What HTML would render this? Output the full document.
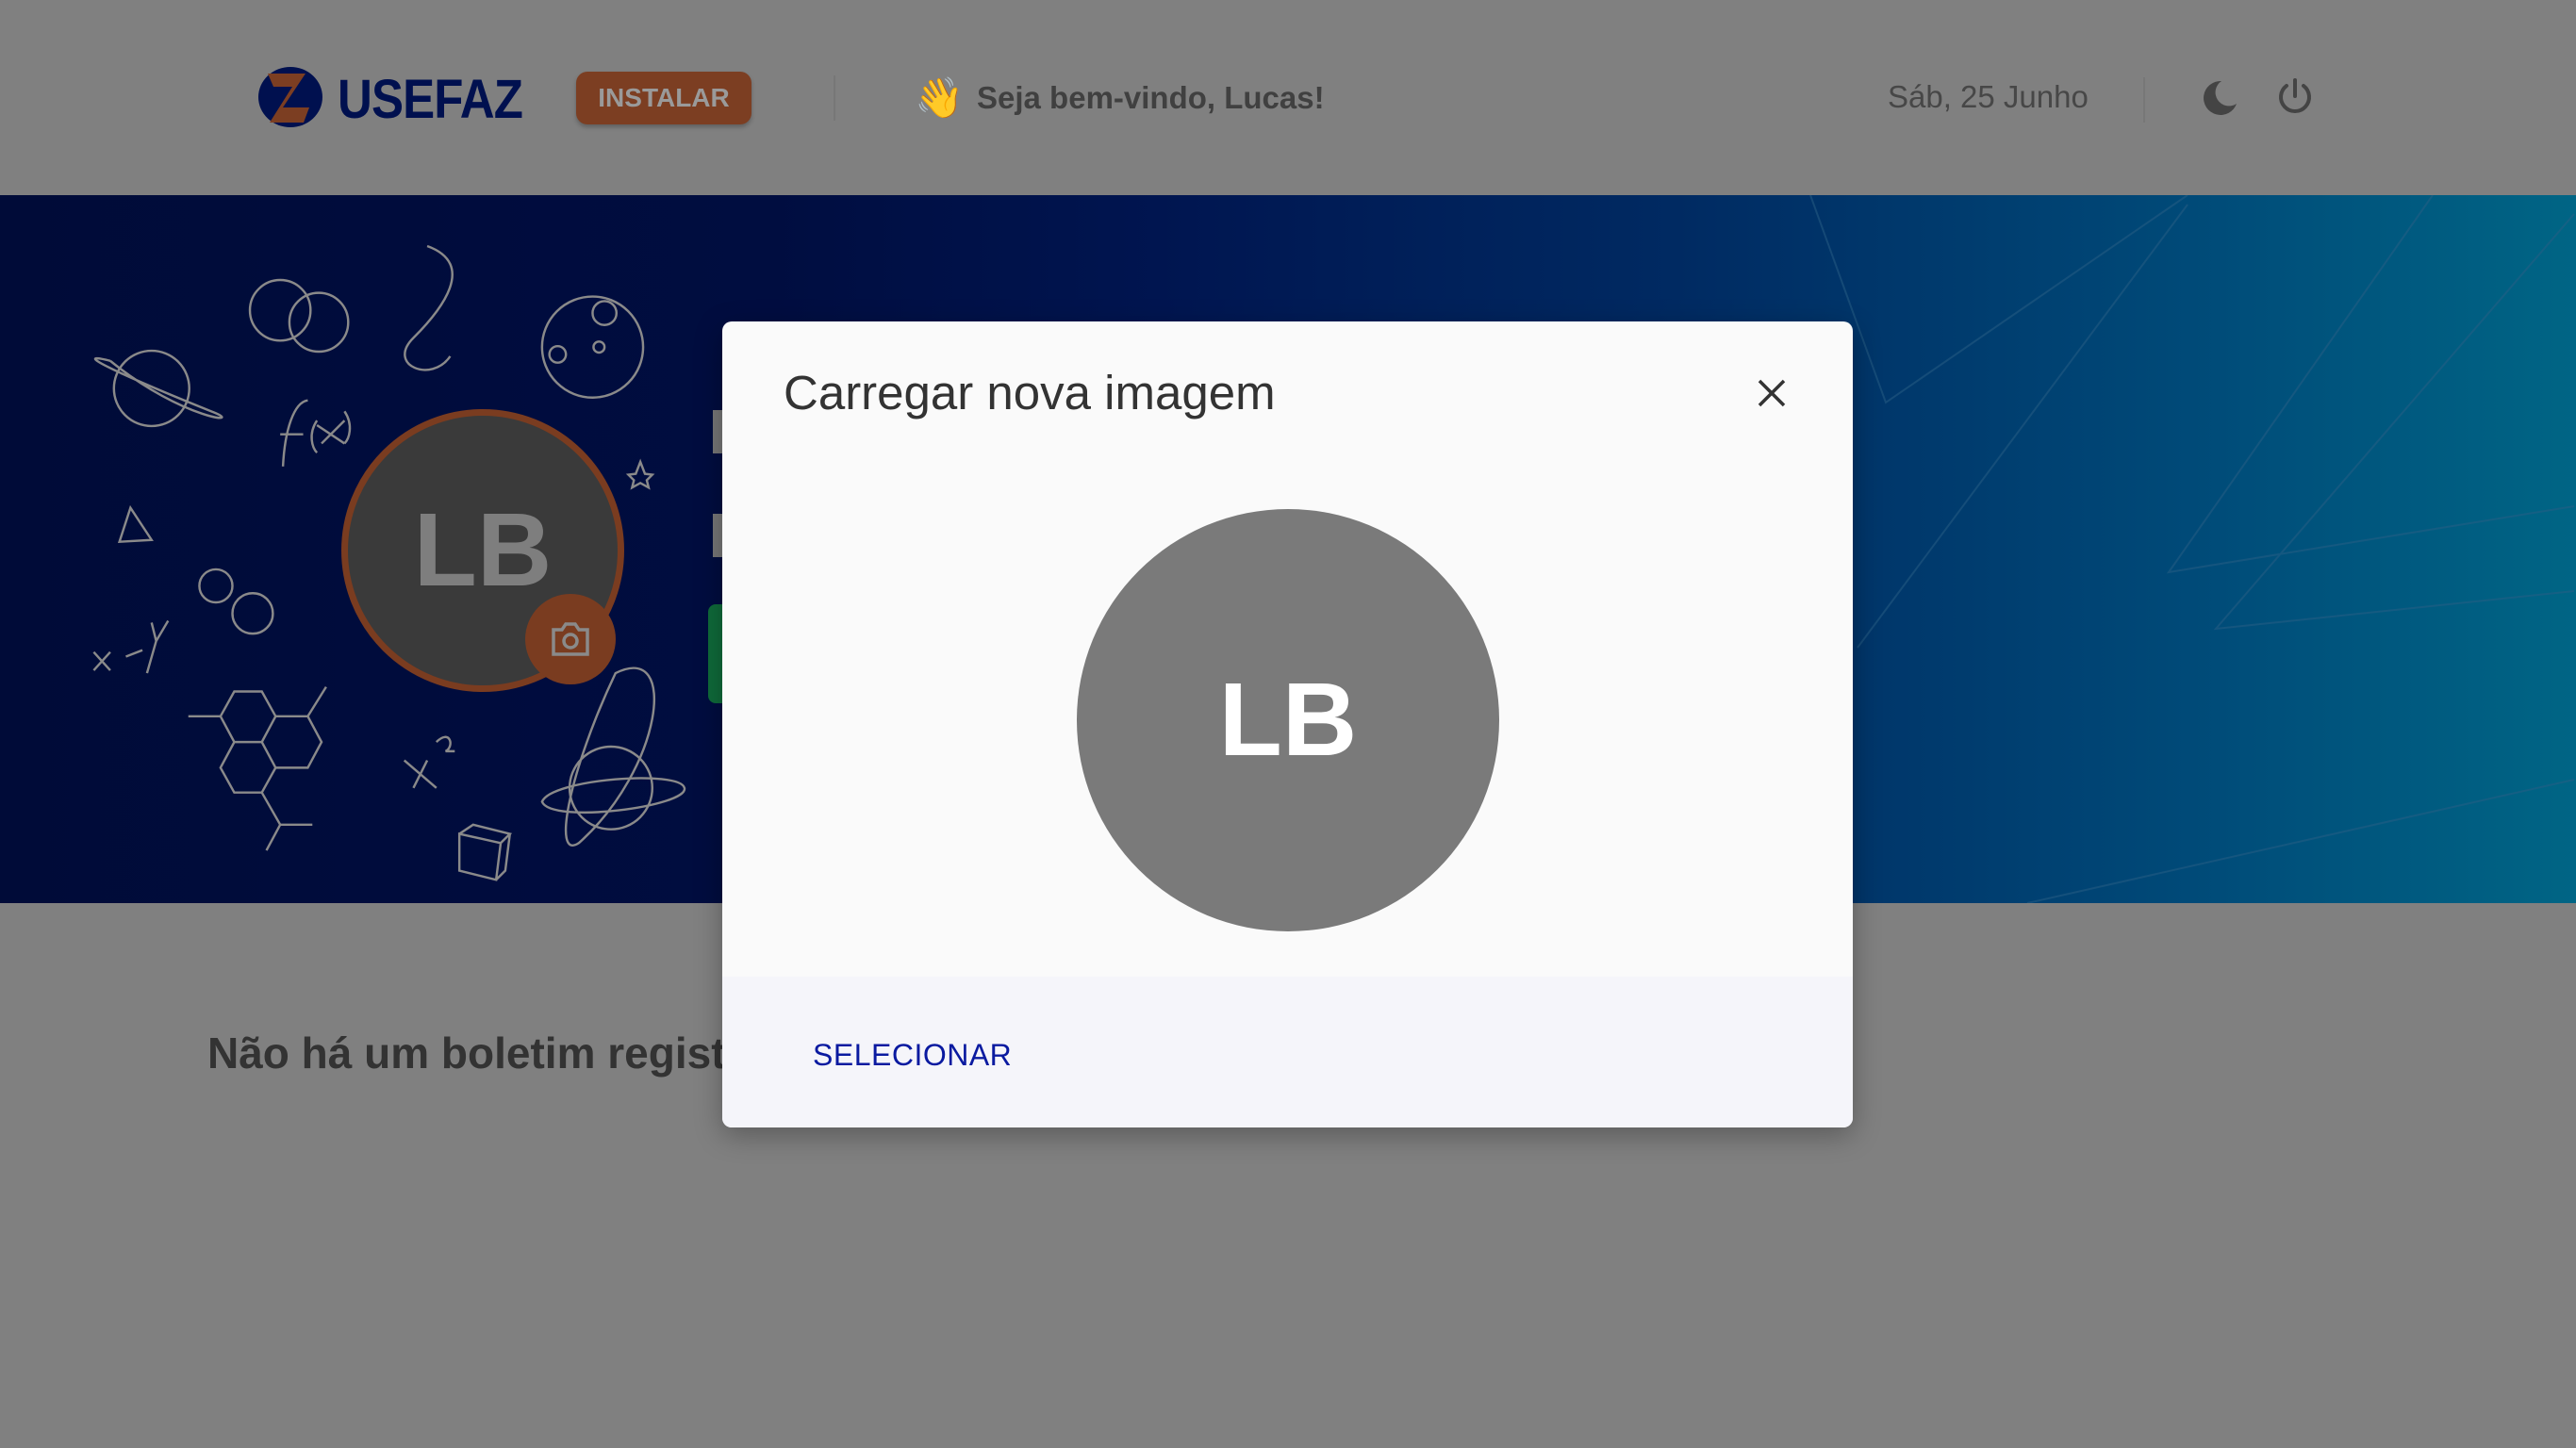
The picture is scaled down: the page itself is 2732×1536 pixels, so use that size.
<!DOCTYPE html>
<html><head><meta charset="utf-8"><style>
*{margin:0;padding:0;box-sizing:border-box}
body{width:2732px;height:1536px;overflow:hidden;background:#808080;font-family:"Liberation Sans",sans-serif;position:relative}
.abs{position:absolute}
#banner{left:0;top:207px;width:2732px;height:751px;background:linear-gradient(90deg,#000b38 0%,#000d40 30%,#001550 45%,#002a62 65%,#004a78 85%,#006585 100%)}
.modal{left:766px;top:341px;width:1199px;height:855px;background:#fafafa;border-radius:10px;overflow:hidden;box-shadow:0 8px 30px rgba(0,0,0,.3)}
</style></head><body>
<svg class="abs" style="left:272px;top:70px" width="72" height="66" viewBox="0 0 72 66"><ellipse cx="36" cy="33" rx="34" ry="32" fill="#00104f"/><path d="M12 8 H52 L28 44 H56 L50 60 H14 L38 22 H18 Z" fill="#7c3e22"/></svg>
<div class="abs" style="left:358px;top:72px;font-size:58px;font-weight:bold;color:#00104f;letter-spacing:-1px;transform:scaleX(0.88);transform-origin:left">USEFAZ</div>
<div class="abs" style="left:611px;top:76px;width:186px;height:56px;background:#7c3e22;border-radius:12px;color:#9a9a9a;font-size:28px;font-weight:bold;text-align:center;line-height:56px;box-shadow:0 3px 5px rgba(0,0,0,.25)">INSTALAR</div>
<div class="abs" style="left:884px;top:80px;width:2px;height:48px;background:#777"></div>
<div class="abs" style="left:970px;top:78px;font-size:42px;line-height:52px;color:#8a6020">👋</div>
<div class="abs" style="left:1036px;top:85px;font-size:33px;font-weight:bold;color:#404040">Seja bem-vindo, Lucas!</div>
<div class="abs" style="left:2002px;top:84px;font-size:33px;color:#474747">Sáb, 25 Junho</div>
<div class="abs" style="left:2273px;top:82px;width:2px;height:48px;background:#777"></div>
<svg class="abs" style="left:2334px;top:84px" width="40" height="40" viewBox="0 0 40 40"><path d="M22 2 A18 18 0 1 0 38 26 A13 13 0 0 1 22 2 Z" fill="#444"/></svg>
<svg class="abs" style="left:2413px;top:82px" width="42" height="42" viewBox="0 0 42 42" fill="none" stroke="#444" stroke-width="4" stroke-linecap="round"><path d="M21 3 V20"/><path d="M12 9 A15 15 0 1 0 30 9"/></svg>
<div id="banner" class="abs"></div>
<svg class="abs" style="left:1800px;top:207px" width="932" height="751" viewBox="0 0 932 751" fill="none" stroke="#2a5f85" stroke-width="2" opacity=".5"><path d="M120 0 L200 220 L520 0"/><path d="M520 10 L170 480"/><path d="M780 0 L500 400 L930 330"/><path d="M930 20 L550 460 L930 420"/><path d="M350 751 L930 620"/></svg>
<svg class="abs" style="left:0;top:207px" width="760" height="751" viewBox="0 0 780 760" fill="none" stroke="#8a8a8a" stroke-width="2.5">
<circle cx="165" cy="205" r="41"/><path d="M120 175 C60 160 180 210 230 230 C270 245 200 240 120 175"/>
<circle cx="305" cy="120" r="33"/><circle cx="347" cy="133" r="32"/>
<path d="M465 50 C520 70 480 120 450 150 C420 180 470 200 490 170"/>
<circle cx="645" cy="160" r="55"/><circle cx="658" cy="123" r="13"/><circle cx="607" cy="168" r="9"/><circle cx="652" cy="160" r="6"/>
<path d="M308 290 C310 250 320 220 335 218 M305 255 H330"/><path d="M345 240 C335 255 340 270 345 275 M345 245 L375 265 M375 240 L350 265 M375 230 C385 245 380 260 375 265"/>
<path d="M142 335 L130 372 L165 370 Z"/>
<circle cx="235" cy="420" r="18"/><circle cx="275" cy="450" r="22"/>
<path d="M102 492 L120 512 M120 492 L102 512 M137 497 L155 490 M165 460 L170 480 L183 458 M170 480 L160 515"/>
<path d="M255 535 H285 L300 562 L285 590 H255 L240 562 Z M300 562 H335 L350 590 L335 618 H300 L285 590 M255 590 L240 618 L255 645 H285 L300 618 M335 562 L355 530 M240 562 H205 M285 645 L305 680 L290 708 M305 680 H340"/>
<path d="M440 610 L475 640 M465 610 L450 640 M475 590 C490 575 495 595 485 600 H495"/>
<path d="M670 515 C740 480 720 620 630 700 C600 720 620 620 670 515 Z"/><circle cx="665" cy="640" r="45"/><path d="M590 655 C600 630 740 620 745 640 C750 660 600 680 590 655 Z"/>
<path d="M500 690 L545 700 L540 740 L500 730 Z M500 690 L515 680 L555 690 L545 700 M555 690 L550 730 L540 740"/>
<path d="M697 285 L702 298 L710 299 L704 305 L706 313 L697 308 L688 313 L690 305 L684 299 L692 298 Z"/>
</svg>
<div class="abs" style="left:362px;top:434px;width:300px;height:300px;border-radius:50%;background:#3a3a3a;border:7px solid #7a3c20;color:#7e7e7e;font-size:110px;font-weight:bold;text-align:center;line-height:286px">LB</div>
<div class="abs" style="left:557px;top:630px;width:96px;height:96px;border-radius:50%;background:#7a3c20"></div>
<svg class="abs" style="left:584px;top:658px" width="42" height="40" viewBox="0 0 42 40" fill="none" stroke="#8a8a8a" stroke-width="3.5"><path d="M3 10 H12 L16 4 H26 L30 10 H39 V36 H3 Z"/><circle cx="21" cy="22" r="7"/></svg>
<div class="abs" style="left:756px;top:435px;width:10px;height:46px;background:#777"></div>
<div class="abs" style="left:756px;top:545px;width:10px;height:46px;background:#777"></div>
<div class="abs" style="left:751px;top:641px;width:15px;height:105px;background:#0f6a3a;border-radius:8px 0 0 8px"></div>
<div class="abs" style="left:220px;top:1090px;font-size:46px;font-weight:bold;color:#333">Não há um boletim registrado</div>
<div class="abs modal">
 <div class="abs" style="left:65px;top:46px;font-size:51px;color:#333">Carregar nova imagem</div>
 <svg class="abs" style="left:1097px;top:60px" width="32" height="32" viewBox="0 0 32 32" stroke="#333" stroke-width="3.5"><path d="M3 3 L29 29 M29 3 L3 29"/></svg>
 <div class="abs" style="left:376px;top:199px;width:448px;height:448px;border-radius:50%;background:#7a7a7a;color:#fff;font-size:110px;font-weight:bold;text-align:center;line-height:448px">LB</div>
 <div class="abs" style="left:0;top:695px;width:1199px;height:160px;background:#f5f5fa"></div>
 <div class="abs" style="left:96px;top:760px;font-size:32px;color:#0a1aa0;letter-spacing:0.5px">SELECIONAR</div>
</div>
</body></html>
